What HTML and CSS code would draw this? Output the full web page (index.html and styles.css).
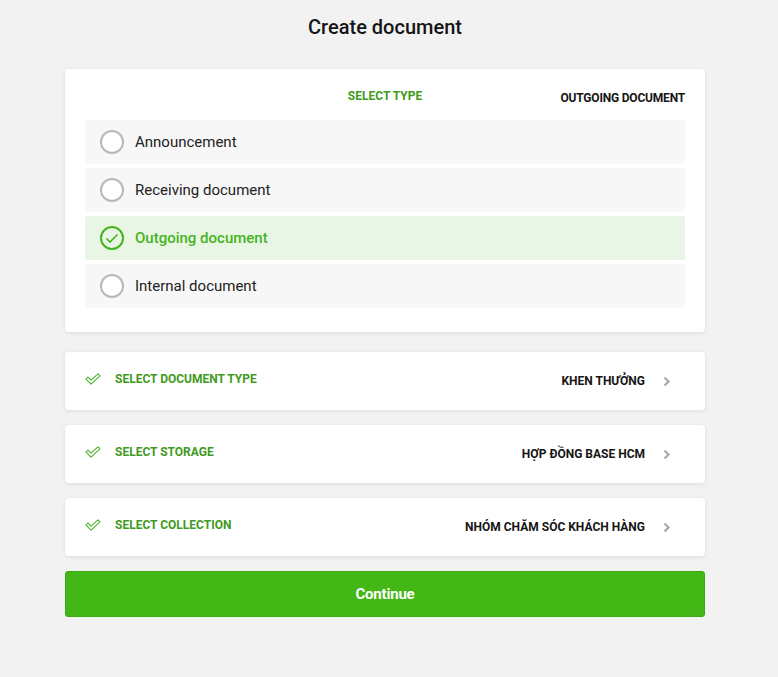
FILE: index.html
```html
<!DOCTYPE html>
<html>
<head>
<meta charset="utf-8">
<link rel="stylesheet" href="styles.css">
</head>
<body>
<div class="page">
  <h1 class="title">Create document</h1>

  <section class="card type-card">
    <div class="type-head">
      <span class="spacer"></span>
      <span class="label green">SELECT TYPE</span>
      <span class="value">OUTGOING DOCUMENT</span>
    </div>
    <ul class="options">
      <li class="option"><span class="radio"></span><span>Announcement</span></li>
      <li class="option"><span class="radio"></span><span>Receiving document</span></li>
      <li class="option selected"><span class="radio">
        <svg width="14" height="11" viewBox="0 0 14 11"><path d="M1.5 5.5 L5 9 L12.5 1.5" fill="none" stroke="#44b41d" stroke-width="1.6"/></svg>
      </span><span>Outgoing document</span></li>
      <li class="option"><span class="radio"></span><span>Internal document</span></li>
    </ul>
  </section>

  <section class="card step-card">
    <svg class="check" width="16" height="12" viewBox="0 0 16 12"><path d="M1 6.2 L3 4.2 L6 7.2 L13 0.8 L15 2.8 L6 11.2 Z" fill="#fff" stroke="#4cb42a" stroke-width="1.1" stroke-linejoin="round"/></svg>
    <span class="label green">SELECT DOCUMENT TYPE</span>
    <span class="value">KHEN THƯỞNG</span>
    <svg class="chev" width="8" height="11" viewBox="0 0 8 11"><path d="M1.5 1.5 L5.5 5.5 L1.5 9.5" fill="none" stroke="#a9a9a9" stroke-width="2.2"/></svg>
  </section>

  <section class="card step-card">
    <svg class="check" width="16" height="12" viewBox="0 0 16 12"><path d="M1 6.2 L3 4.2 L6 7.2 L13 0.8 L15 2.8 L6 11.2 Z" fill="#fff" stroke="#4cb42a" stroke-width="1.1" stroke-linejoin="round"/></svg>
    <span class="label green">SELECT STORAGE</span>
    <span class="value">HỢP ĐỒNG BASE HCM</span>
    <svg class="chev" width="8" height="11" viewBox="0 0 8 11"><path d="M1.5 1.5 L5.5 5.5 L1.5 9.5" fill="none" stroke="#a9a9a9" stroke-width="2.2"/></svg>
  </section>

  <section class="card step-card">
    <svg class="check" width="16" height="12" viewBox="0 0 16 12"><path d="M1 6.2 L3 4.2 L6 7.2 L13 0.8 L15 2.8 L6 11.2 Z" fill="#fff" stroke="#4cb42a" stroke-width="1.1" stroke-linejoin="round"/></svg>
    <span class="label green">SELECT COLLECTION</span>
    <span class="value">NHÓM CHĂM SÓC KHÁCH HÀNG</span>
    <svg class="chev" width="8" height="11" viewBox="0 0 8 11"><path d="M1.5 1.5 L5.5 5.5 L1.5 9.5" fill="none" stroke="#a9a9a9" stroke-width="2.2"/></svg>
  </section>

  <button class="continue">Continue</button>
</div>
</body>
</html>
```

FILE: styles.css
```css
* { box-sizing: border-box; }
html, body { margin: 0; padding: 0; }
body {
  background: #f2f2f2;
  font-family: Roboto, "Liberation Sans", sans-serif;
  color: #1c1c1c;
}
.page {
  width: 640px;
  margin: 0 0 0 65px;
  padding: 15px 0 0 0;
  display: flex;
  flex-direction: column;
}
.title {
  margin: 0;
  text-align: center;
  font-size: 20px;
  font-weight: 500;
  line-height: 24px;
  color: #151515;
}
.card {
  background: #fff;
  border-radius: 4px;
  box-shadow: 0 1px 4px rgba(0,0,0,0.09);
}
.type-card {
  margin-top: 30px;
  padding: 20px 20px 24px;
}
.type-head {
  display: grid;
  grid-template-columns: 1fr auto 1fr;
  align-items: start;
  height: 31px;
}
.label {
  font-size: 12px;
  font-weight: 700;
  line-height: 14px;
}
.green { color: #3f9a21; }
.value {
  font-size: 12px;
  font-weight: 700;
  line-height: 14px;
  color: #151515;
}
.type-head .value {
  justify-self: end;
  padding-top: 2px;
  letter-spacing: -0.2px;
}
.options {
  list-style: none;
  margin: 0;
  padding: 0;
  display: flex;
  flex-direction: column;
  gap: 4px;
}
.option {
  height: 44px;
  background: #f7f7f7;
  border-radius: 3px;
  display: flex;
  align-items: center;
  padding-left: 15px;
  gap: 11px;
  font-size: 15px;
  color: #222;
}
.radio {
  width: 24px;
  height: 24px;
  border: 2px solid #b8b8b8;
  border-radius: 50%;
  display: flex;
  align-items: center;
  justify-content: center;
  background: #fff;
}
.option.selected {
  background: #eaf6e5;
  color: #45b41f;
  font-weight: 500;
}
.option.selected .radio {
  border-color: #44b41d;
  background: transparent;
}
.step-card {
  margin-top: 15px;
  height: 58px;
  display: flex;
  align-items: center;
  padding: 0 34px 0 20px;
}
.type-card + .step-card { margin-top: 20px; }
.step-card .check { margin-top: -5px; }
.step-card .label {
  margin-left: 14px;
  margin-top: -5px;
}
.step-card .value {
  margin-left: auto;
  margin-top: -1px;
}
.step-card .chev {
  margin-left: 18px;
}
.continue {
  margin-top: 15px;
  height: 46px;
  width: 100%;
  border: 1px solid #3aa812;
  border-radius: 3px;
  background: #42b715;
  color: #fff;
  font-family: Roboto, "Liberation Sans", sans-serif;
  font-size: 15px;
  font-weight: 700;
  letter-spacing: -0.2px;
}
```
